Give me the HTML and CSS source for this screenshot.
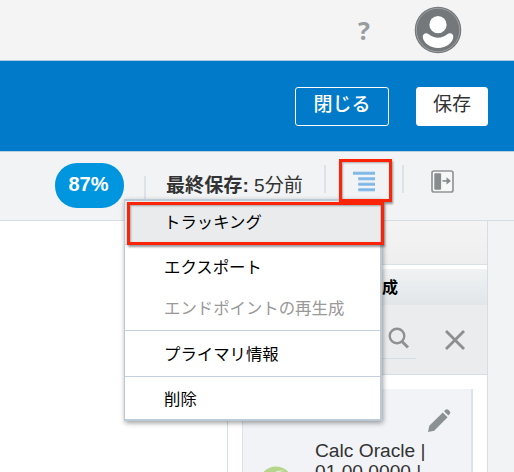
FILE: index.html
```html
<!DOCTYPE html>
<html lang="ja">
<head>
<meta charset="utf-8">
<title>統合</title>
<link rel="stylesheet" href="styles.css">
</head>
<body>
<header class="topbar">
  <span class="help">?</span>
  <svg class="avatar" width="48" height="48" viewBox="0 0 48 48">
    <circle cx="24" cy="24" r="23.3" fill="#74787a"/>
    <circle cx="24" cy="24" r="21.7" fill="none" stroke="#a4a8aa" stroke-width=".8"/>
    <circle cx="24" cy="18.7" r="8.6" fill="#fff"/>
    <path d="M8.800 30.500c0-3 3.500-4.500 6-2.200 5.500 4.500 13 4.500 18.500 0 2.700-2.300 6-.7 6 2.200 0 6-7 11.500-15.200 11.500S8.800 36.500 8.800 30.500z" fill="#fff"/>
  </svg>
</header>
<div class="banner">
  <button class="btn close">閉じる</button>
  <button class="btn save">保存</button>
</div>
<div class="toolbar">
  <span class="percent">87%</span>
  <span class="divider first"></span>
  <span class="saved"><b>最終保存:</b> 5分前</span>
  <span class="divider second"></span>
  <span class="menu-button">
    <svg width="22" height="22" viewBox="0 0 22 22"><path d="M0 2.300h22M5.300 7.800H22M5.300 13.300H22M5.300 18.800H22" stroke="#a9d0f1" stroke-width="3.600"/><path d="M0 2.300h22M5.300 7.800H22M5.300 13.300H22M5.300 18.800H22" stroke="#7db6e5" stroke-width="2"/></svg>
  </span>
  <span class="divider third"></span>
  <svg class="panel-icon" width="23" height="23" viewBox="0 0 23 23"><rect x="1" y="1" width="21" height="21" rx="2" fill="#f6f7f7" stroke="#929698" stroke-width="1.700"/><rect x="3.300" y="3.300" width="6.800" height="16.400" rx="1" fill="#888c8e"/><path d="M11.500 10.900H16" stroke="#858a8c" stroke-width="1.600"/><path d="M15.500 7.200l4.500 3.700-4.500 3.700z" fill="#858a8c"/></svg>
</div>
<main class="workspace">
  <div class="canvas"></div>
  <aside class="panel">
    <div class="tabs"></div>
    <div class="panel-title">成</div>
    <div class="search">
      <div class="field"><svg width="22" height="24" viewBox="0 0 22 24"><circle cx="9" cy="9" r="7.300" fill="none" stroke="#8e9294" stroke-width="2.400"/><path d="M14 14.500l6 6" stroke="#8e9294" stroke-width="3"/></svg></div>
      <svg class="clear" width="22" height="22" viewBox="0 0 22 22"><path d="M2 2l18 18M20 2L2 20" stroke="#8b8f91" stroke-width="2.800"/></svg>
    </div>
    <div class="list">
      <article class="card">
        <svg class="badge" width="34" height="34" viewBox="0 0 34 34"><circle cx="17" cy="17" r="16.500" fill="#b4d58a"/><path d="M8 15C11 7 20 3 26 5 18 5 14 9 13 15z" fill="#e8f3d8"/></svg>
        <div class="label">Calc Oracle |<br>01.00.0000 |</div>
        <svg class="pencil" width="24" height="24" viewBox="0 0 24 24"><path d="M1 23l1.300-6.200L15.800 3.400l4.800 4.800L7.200 21.700z" fill="#8b9092"/><path d="M17 2.300l1.500-1.500c1-.9 2-.7 3 .3l1 1c1 1 1 2 .2 2.800l-1.300 1.500z" fill="#8b9092"/></svg>
      </article>
    </div>
  </aside>
</main>
<nav class="menu">
  <div class="group"><div class="item active">トラッキング</div></div>
  <div class="group middle"><div class="item">エクスポート</div><div class="item disabled">エンドポイントの再生成</div></div>
  <div class="group"><div class="item">プライマリ情報</div></div>
  <div class="group"><div class="item">削除</div></div>
</nav>
<div class="mark mark-button"></div>
<div class="mark mark-item"></div>
</body>
</html>
```
FILE: styles.css
```css
* { box-sizing: border-box; }
body {
  margin: 0;
  width: 514px;
  height: 472px;
  overflow: hidden;
  position: relative;
  background: #f2f3f5;
  font-family: "Liberation Sans", "Noto Sans CJK JP", sans-serif;
  color: #333;
}
svg { display: block; flex: none; }
.topbar {
  height: 61px;
  display: flex;
  justify-content: flex-end;
  align-items: center;
  padding-right: 52px;
  background: #f4f4f4;
  border-bottom: 1px solid #a9c9e5;
}
.help {
  width: 14px;
  margin-right: 43px;
  text-align: center;
  font: bold 25px/30px "Open Sans", sans-serif;
  color: #989c9e;
}
.banner {
  height: 91px;
  display: flex;
  justify-content: flex-end;
  align-items: center;
  gap: 27px;
  padding: 0 26px 0 0;
  background: #007ac9;
  border-bottom: 1px solid #b7d0e6;
}
.btn {
  height: 39px;
  padding: 0 0 2px;
  border: 1px solid #fff;
  border-radius: 3px;
  font: 19px/32px "Liberation Sans", "Noto Sans CJK JP", sans-serif;
}
.close { width: 94px; background: transparent; color: #fff; font-weight: 500; }
.save { width: 72px; background: #fff; color: #333; }
.toolbar {
  height: 69px;
  display: flex;
  align-items: flex-start;
  padding: 11px 0 0 55px;
  border-bottom: 1px solid #d6dee4;
}
.percent {
  width: 69px;
  height: 45px;
  padding-right: 2px;
  border-radius: 22px;
  background: #0096df;
  color: #fff;
  text-align: center;
  font: bold 20px/43px "Liberation Sans", sans-serif;
}
.divider { width: 2px; height: 28px; background: #dce2e7; flex: none; }
.first { margin: 13px 0 0 20px; }
.second, .third { margin-top: 2px; }
.saved {
  width: 178px;
  padding-left: 20px;
  white-space: nowrap;
  font-size: 19.1px;
  line-height: 45px;
}
.menu-button { width: 76px; padding: 8px 0 0 27px; }
.panel-icon { margin: 7px 0 0 27px; }
.workspace { display: flex; height: 251px; overflow: hidden; }
.canvas { width: 227px; background: #fff; }
.panel {
  width: 261px;
  border-left: 1px solid #d5dee5;
  border-right: 1px solid #d5dee5;
  background: #fff;
}
.tabs { height: 44px; background: linear-gradient(#f4f4f4, #eeeeee); border-bottom: 1px solid #d9e0e6; }
.panel-title {
  height: 40px;
  padding-left: 154px;
  border-top: 4px solid #fff;
  background: linear-gradient(#f0f2f3, #e2e6e9);
  font: bold 16px/34px "Noto Sans CJK JP", sans-serif;
  color: #000;
}
.search {
  height: 70px;
  display: flex;
  background: #ebecee;
  border-bottom: 1px solid #d2dde5;
}
.field { width: 188px; height: 54px; padding: 22px 0 0 160px; border-bottom: 1px solid #d2dee7; }
.clear { margin: 24px 0 0 28px; }
.list { height: 97px; padding: 14px 14px 0; }
.card {
  height: 83px;
  display: flex;
  padding: 20px 0 0 16px;
  background: #f2f3f7;
  border-left: 1px solid #d9e4ec;
  border-right: 2px solid #d9e4ec;
}
.badge { margin-top: 57px; }
.label { width: 110px; margin: 31px 0 0 22px; font-size: 19.2px; line-height: 21px; white-space: nowrap; }
.pencil { margin-left: 2px; }
.menu {
  position: absolute;
  left: 124px;
  top: 199px;
  width: 258px;
  height: 222px;
  border: 1px solid #bccad6;
  border-width: 2px 2px 2px 1px;
  background: #fff;
  box-shadow: 1px 2px 5px rgba(0, 0, 0, .38);
  color: #000;
  font-size: 16.4px;
}
.group + .group { border-top: 1px solid #c2d1dd; }
.item { height: 43px; padding-left: 39px; line-height: 43px; white-space: nowrap; }
.active { background: #e9ebed; }
.middle { padding-top: 2px; }
.group + .middle { height: 86px; }
.middle .item { height: 41px; line-height: 40px; }
.middle + .group { height: 46px; padding-top: 1px; }
.middle + .group .item { line-height: 44px; }
.group:last-child { height: 43px; padding-top: 1px; }
.group:last-child .item { height: 41px; line-height: 42px; }
.disabled { color: #999; }
.mark { position: absolute; border: 3px solid #fb2409; box-shadow: 1px 2px 2px rgba(0, 0, 0, .4), inset 1px 1px 2px rgba(0, 0, 0, .3); }
.mark-button { left: 339px; top: 159px; width: 53px; height: 43px; }
.mark-item { left: 127px; top: 202px; width: 257px; height: 43px; }
```
